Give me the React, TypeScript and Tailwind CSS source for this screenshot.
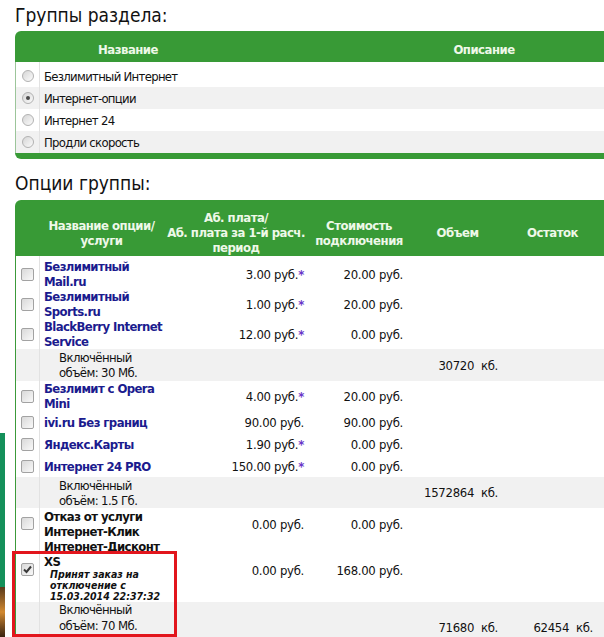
import React from 'react';

type OptRow = {
  kind: 'opt';
  name: string[];
  black?: boolean;
  price: string;
  star?: boolean;
  cost: string;
  checked?: boolean;
  note?: string[];
  h: string;
  top?: boolean;
};

type VolRow = {
  kind: 'vol';
  text: string[];
  vol: string;
  rest?: string;
  h: string;
  top?: boolean;
};

const groups = ['Безлимитный Интернет', 'Интернет-опции', 'Интернет 24', 'Продли скорость'];

const rows: (OptRow | VolRow)[] = [
  { kind: 'opt', name: ['Безлимитный', 'Mail.ru'], price: '3.00 руб.', star: true, cost: '20.00 руб.', h: 'h-[30px]' },
  { kind: 'opt', name: ['Безлимитный', 'Sports.ru'], price: '1.00 руб.', star: true, cost: '20.00 руб.', h: 'h-[30px]' },
  { kind: 'opt', name: ['BlackBerry Internet', 'Service'], price: '12.00 руб.', star: true, cost: '0.00 руб.', h: 'h-[30px]' },
  { kind: 'vol', text: ['Включённый', 'объём: 30 Мб.'], vol: '30720\u00a0 кб.', h: 'h-[32px]' },
  { kind: 'opt', name: ['Безлимит с Opera', 'Mini'], price: '4.00 руб.', star: true, cost: '20.00 руб.', h: 'h-[30px]' },
  { kind: 'opt', name: ['ivi.ru Без границ'], price: '90.00 руб.', cost: '90.00 руб.', h: 'h-[22px]' },
  { kind: 'opt', name: ['Яндекс.Карты'], price: '1.90 руб.', star: true, cost: '0.00 руб.', h: 'h-[22px]' },
  { kind: 'opt', name: ['Интернет 24 PRO'], price: '150.00 руб.', star: true, cost: '0.00 руб.', h: 'h-[22px]' },
  { kind: 'vol', text: ['Включённый', 'объём: 1.5 Гб.'], vol: '1572864\u00a0 кб.', h: 'h-[31px]' },
  {
    kind: 'opt',
    name: ['Отказ от услуги', 'Интернет-Клик', 'Интернет-Дисконт'],
    black: true,
    price: '0.00 руб.',
    cost: '0.00 руб.',
    h: 'h-[46px]',
    top: true,
  },
  {
    kind: 'opt',
    name: ['XS'],
    black: true,
    note: ['Принят заказ на', 'отключение с', '15.03.2014 22:37:32'],
    price: '0.00 руб.',
    cost: '168.00 руб.',
    checked: true,
    h: 'h-[48px]',
    top: true,
  },
  { kind: 'vol', text: ['Включённый', 'объём: 70 Мб.'], vol: '71680\u00a0 кб.', rest: '62454\u00a0 кб.', h: 'h-[52px]', top: true },
];

const Check: React.FC<{ checked?: boolean }> = ({ checked }) => (
  <span className="relative block h-[13px] w-[13px] rounded-[2px] border border-[#a2a2a2] bg-linear-to-br from-[#d9d9d9] to-[#f9f9f9]">
    {checked && (
      <svg className="absolute left-[1px] top-[1px]" width="9" height="9" viewBox="0 0 9 9">
        <path d="M1 4.5 L3.5 7 L8 1.5" fill="none" stroke="#3a3a3a" strokeWidth="2" />
      </svg>
    )}
  </span>
);

const Radio: React.FC<{ checked?: boolean }> = ({ checked }) => (
  <span className="flex h-[12px] w-[12px] items-center justify-center rounded-full border border-[#b2b2b2] bg-linear-to-br from-[#d6d6d6] to-[#fbfbfb]">
    {checked && <span className="h-[4px] w-[4px] rounded-full bg-[#4a4a4a]" />}
  </span>
);

export default function App() {
  return (
    <div className="relative h-[637px] w-[604px] overflow-hidden bg-white pl-[15px] font-['DejaVu_Sans_Condensed','DejaVu_Sans',sans-serif] font-stretch-condensed text-[13px] text-[#111]">
      {/* left page decoration */}
      <div className="absolute left-0 top-[433px] h-[154px] w-[5px] bg-[#14905a]" />
      <div className="absolute left-0 top-[587px] h-[50px] w-[5px] bg-linear-to-b from-[#5a3a1a] via-[#d2892f] to-[#3a2410]" />

      <h2 className="mt-[3px] text-[19px] leading-[24px] text-[#111]">Группы раздела:</h2>

      <table className="mt-[4px] w-[712px] table-fixed border-separate border-spacing-0 tracking-[-0.7px]">
        <colgroup>
          <col className="w-[24px]" />
          <col className="w-[202px]" />
          <col className="w-[486px]" />
        </colgroup>
        <thead>
          <tr className="tracking-[-0.5px]">
            <th colSpan={2} className="h-[31px] rounded-tl-[6px] bg-[#389a36] p-0 pt-[6px] font-bold text-[#eef8e8]">
              Название
            </th>
            <th className="h-[31px] bg-[#389a36] p-0 pt-[6px] font-bold text-[#eef8e8]">Описание</th>
          </tr>
        </thead>
        <tbody>
          <tr className="h-[3px]">
            <td className="border-l border-[#9cc59a] p-0" />
            <td className="border-l border-[#e2e2e2] p-0" />
            <td className="p-0" />
          </tr>
          {groups.map((g, i) => (
            <tr key={g} className={i % 2 === 1 ? 'h-[22px] bg-[#f1f1f1]' : 'h-[22px] bg-white'}>
              <td className="border-l border-[#9cc59a] p-0">
                <div className="flex justify-center">
                  <Radio checked={i === 1} />
                </div>
              </td>
              <td className="border-l border-[#e2e2e2] p-0 pl-[4px] leading-[15px]">{g}</td>
              <td className="p-0" />
            </tr>
          ))}
          <tr>
            <td colSpan={3} className="h-[6px] rounded-bl-[6px] bg-[#389a36] p-0" />
          </tr>
        </tbody>
      </table>

      <h2 className="mt-[12px] text-[19px] leading-[24px] text-[#111]">Опции группы:</h2>

      <table className="mt-[5px] w-[630px] table-fixed border-separate border-spacing-0">
        <colgroup>
          <col className="w-[24px]" />
          <col className="w-[125px]" />
          <col className="w-[144px]" />
          <col className="w-[102px]" />
          <col className="w-[95px]" />
          <col className="w-[95px]" />
          <col className="w-[45px]" />
        </colgroup>
        <thead>
          <tr className="bg-[#389a36] font-bold leading-[15px] tracking-[-0.5px] text-[#eef8e8]">
            <th className="h-[56px] rounded-tl-[6px] p-0" />
            <th className="h-[56px] p-0 pt-[9px] font-bold">
              Название опции/
              <br />
              услуги
            </th>
            <th className="h-[56px] whitespace-nowrap p-0 pt-[9px] font-bold">
              Аб. плата/
              <br />
              Аб. плата за 1-й расч.
              <br />
              период
            </th>
            <th className="h-[56px] p-0 pt-[9px] font-bold">
              Стоимость
              <br />
              подключения
            </th>
            <th className="h-[56px] p-0 pt-[9px] font-bold">Объем</th>
            <th className="h-[56px] p-0 pt-[9px] font-bold">Остаток</th>
            <th className="h-[56px] p-0" />
          </tr>
        </thead>
        <tbody className="leading-[15px]">
          <tr className="h-[3px]">
            <td className="border-l border-[#3c9a3a] p-0" />
            <td className="border-l border-[#e2e2e2] p-0" />
            <td colSpan={5} className="p-0" />
          </tr>
          {rows.map((r, i) => {
            const cell = r.top ? 'p-0 pt-[9px] align-top' : 'p-0 align-middle';
            if (r.kind === 'vol') {
              return (
                <tr key={i} className={`${r.h} bg-[#f1f1f1]`}>
                  <td className="border-l border-[#3c9a3a] p-0" />
                  <td
                    className={
                      r.top
                        ? 'border-l border-[#e2e2e2] p-0 pl-[19px] align-top leading-[16px] tracking-[-0.6px]'
                        : 'border-l border-[#e2e2e2] p-0 pl-[19px] tracking-[-0.6px]'
                    }
                  >
                    {r.text[0]}
                    <br />
                    {r.text[1]}
                  </td>
                  <td className="p-0" />
                  <td className="p-0" />
                  <td className={r.top ? 'whitespace-pre p-0 pr-[7px] pt-[18px] text-right align-top tracking-[-0.3px]' : 'whitespace-pre p-0 pr-[7px] text-right tracking-[-0.3px]'}>
                    {r.vol}
                  </td>
                  <td className={r.top ? 'whitespace-pre p-0 pr-[7px] pt-[18px] text-right align-top tracking-[-0.3px]' : 'whitespace-pre p-0 pr-[7px] text-right tracking-[-0.3px]'}>
                    {r.rest}
                  </td>
                  <td className="p-0" />
                </tr>
              );
            }
            return (
              <tr key={i} className={`${r.h} bg-white`}>
                <td className={`border-l border-[#3c9a3a] ${cell}`}>
                  <div className="flex justify-center">
                    <Check checked={r.checked} />
                  </div>
                </td>
                <td className="border-l border-[#e2e2e2] p-0 pl-[4px] align-middle">
                  <div className={r.black ? 'font-bold tracking-[-0.6px] text-[#111]' : 'font-bold tracking-[-0.6px] text-[#1b1b8e]'}>
                    {r.name.map((n) => (
                      <div key={n} className="whitespace-nowrap">
                        {n}
                      </div>
                    ))}
                  </div>
                  {r.note && (
                    <div className="pl-[6px] text-[10.5px] font-bold italic leading-[11px] text-[#111]">
                      {r.note.map((n) => (
                        <div key={n} className="whitespace-nowrap">
                          {n}
                        </div>
                      ))}
                    </div>
                  )}
                </td>
                <td className={`whitespace-nowrap pr-[4px] text-right tracking-[-0.3px] ${cell}`}>
                  {r.price}
                  {r.star && <span className="font-bold text-[#6a36c8]">*</span>}
                </td>
                <td className={`whitespace-nowrap pr-[7px] text-right tracking-[-0.3px] ${cell}`}>{r.cost}</td>
                <td className="p-0" />
                <td className="p-0" />
                <td className="p-0" />
              </tr>
            );
          })}
        </tbody>
      </table>

      {/* highlight frame */}
      <div className="absolute left-[12px] top-[551px] h-[86px] w-[165px] border-[3px] border-[#e2161d]" />
    </div>
  );
}
